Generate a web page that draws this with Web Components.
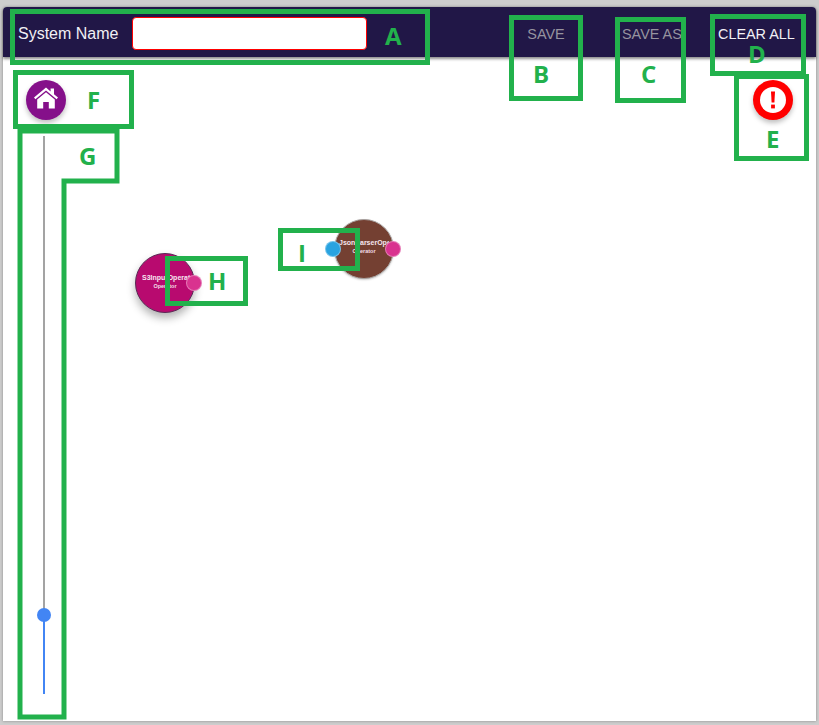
<!DOCTYPE html>
<html>
<head>
<meta charset="utf-8">
<title>System editor</title>
<style>
  html, body { margin: 0; height: 100%; }
  body {
    background: #cdcdcd;
    font-family: "Liberation Sans", Arial, sans-serif;
    overflow: hidden;
  }
</style>
</head>
<body>
<editor-window>
  <top-bar slot="bar">
    <system-name label="System Name"></system-name>
    <bar-button slot="actions" dim style="width:38px;margin-right:57px">SAVE</bar-button>
    <bar-button slot="actions" dim style="width:58px;margin-right:38px">SAVE AS</bar-button>
    <bar-button slot="actions" style="width:76px">CLEAR ALL</bar-button>
  </top-bar>
  <round-action style="left:26px;top:80px;background:#85108a" icon="home"></round-action>
  <round-action style="left:753px;top:80px;background:#ff0000" icon="alert"></round-action>
  <zoom-slider style="left:33px;top:129px"></zoom-slider>
  <flow-node style="left:135px;top:253px;background:#b80a6f;border-color:#5a2a55;--title-left:6px" title-text="S3InputOperator" shade></flow-node>
  <flow-node style="left:334px;top:219px;background:#744032;border-color:#a8a2a0;--title-left:4px;--title-top:-1px" title-text="JsonParserOperator" both></flow-node>

  <note-box style="left:10px;top:9px;width:410px;height:46px" label="A" lx="370" ly="8"></note-box>
  <note-box style="left:509px;top:15px;width:64px;height:76px" label="B" lx="19" ly="40"></note-box>
  <note-box style="left:615px;top:17px;width:61px;height:76px" label="C" lx="21" ly="38"></note-box>
  <note-box style="left:710px;top:14px;width:86px;height:52px" label="D" lx="33" ly="21"></note-box>
  <note-box style="left:734px;top:74px;width:65px;height:77px" label="E" lx="27" ly="46"></note-box>
  <note-box style="left:13px;top:70px;width:111px;height:49px" label="F" lx="69" ly="11"></note-box>
  <note-box style="left:165px;top:256px;width:73px;height:40px" label="H" lx="38" ly="6"></note-box>
  <note-box style="left:278px;top:228px;width:72px;height:33px" label="I" lx="15" ly="6"></note-box>
  <note-shape></note-shape>
</editor-window>

<script>
class EditorWindow extends HTMLElement {
  constructor() {
    super();
    this.attachShadow({ mode: 'open' });
    this.shadowRoot.innerHTML = `
      <style>
        :host { display: block; position: absolute; inset: 0; }
        #paper {
          margin: 7px 3px 0 3px;
          height: 714px;
          background: #fff;
          border-radius: 4px 4px 0 0;
          box-shadow: 0 0 3px rgba(0,0,0,.35);
        }
      </style>
      <div id="paper"><slot name="bar"></slot></div>
      <slot></slot>
    `;
  }
}
customElements.define('editor-window', EditorWindow);

class TopBar extends HTMLElement {
  constructor() {
    super();
    this.attachShadow({ mode: 'open' });
    this.shadowRoot.innerHTML = `
      <style>
        :host {
          display: flex;
          align-items: center;
          justify-content: space-between;
          height: 50px;
          box-sizing: border-box;
          padding: 0 22px 0 15px;
          background: #211747;
          border-radius: 4px 4px 0 0;
          box-shadow: 0 2px 3px rgba(0,0,0,.45);
        }
        #actions { display: flex; align-items: center; margin-top: 4px; }
      </style>
      <slot></slot>
      <div id="actions"><slot name="actions"></slot></div>
    `;
  }
}
customElements.define('top-bar', TopBar);

class SystemName extends HTMLElement {
  constructor() {
    super();
    this.attachShadow({ mode: 'open' });
    this.shadowRoot.innerHTML = `
      <style>
        :host { display: flex; align-items: center; gap: 14px; margin-top: 2px; }
        label { color: #f1f0f5; font-size: 16px; margin-top: 2px; }
        input {
          width: 235px;
          height: 33px;
          box-sizing: border-box;
          border: 1px solid #f00;
          border-radius: 4px;
          background: #fff;
          outline: none;
          padding: 0 8px;
        }
      </style>
      <label></label><input type="text">
    `;
    this.shadowRoot.querySelector('label').textContent = this.getAttribute('label');
  }
}
customElements.define('system-name', SystemName);

class BarButton extends HTMLElement {
  constructor() {
    super();
    this.attachShadow({ mode: 'open' });
    this.shadowRoot.innerHTML = `
      <style>
        :host {
          display: block;
          font-size: 14.4px;
          white-space: nowrap;
          text-align: center;
          color: #f1f0f5;
        }
        :host([dim]) { color: #96939f; }
      </style>
      <slot></slot>
    `;
  }
}
customElements.define('bar-button', BarButton);

const ICONS = {
  home: `<svg width="26" height="22" viewBox="0 0 26 22">
    <path fill="#fff" d="M13 0.5 L1 10.6 L2.4 12.3 L13 3.6 L23.6 12.3 L25 10.6 L21 7.2 V1.5 H17.6 V4.4 Z"/>
    <path fill="#fff" d="M13 5.2 L4.2 12.5 V21.5 H10.2 V15 H15.8 V21.5 H21.8 V12.5 Z"/>
  </svg>`,
  alert: `<svg width="40" height="40" viewBox="0 0 40 40">
    <circle cx="20" cy="20" r="13" fill="#fff"/>
    <path fill="#f00" d="M18 11.5 H22 L21.4 22.5 H18.6 Z"/>
    <rect x="18.1" y="24.6" width="3.8" height="3.8" fill="#f00"/>
  </svg>`
};

class RoundAction extends HTMLElement {
  constructor() {
    super();
    this.attachShadow({ mode: 'open' });
    this.shadowRoot.innerHTML = `
      <style>
        :host {
          position: absolute;
          width: 40px;
          height: 40px;
          border-radius: 50%;
          display: flex;
          align-items: center;
          justify-content: center;
          box-shadow: 0 3px 5px rgba(0,0,0,.25);
        }
        svg { display: block; }
        :host([icon="home"]) svg { margin-top: -4px; }
      </style>
      ${ICONS[this.getAttribute('icon')]}
    `;
  }
}
customElements.define('round-action', RoundAction);

class ZoomSlider extends HTMLElement {
  constructor() {
    super();
    this.attachShadow({ mode: 'open' });
    this.shadowRoot.innerHTML = `
      <style>
        :host { position: absolute; width: 22px; height: 565px; }
        #rail {
          position: absolute; left: 10px; top: 7px; bottom: 0; width: 2px;
          background: linear-gradient(#a3a3a3 0 479px, #4285f4 479px);
        }
        #knob {
          position: absolute; left: 4px; top: 479px; width: 14px; height: 14px;
          border-radius: 50%; background: #4285f4;
        }
      </style>
      <div id="rail"></div><div id="knob"></div>
    `;
  }
}
customElements.define('zoom-slider', ZoomSlider);

class FlowNode extends HTMLElement {
  constructor() {
    super();
    this.attachShadow({ mode: 'open' });
    this.shadowRoot.innerHTML = `
      <style>
        :host {
          position: absolute;
          width: 60px;
          height: 60px;
          box-sizing: border-box;
          border-radius: 50%;
          border: 1px solid;
          color: #fff;
          box-shadow: 0 1px 2px rgba(0,0,0,.2);
        }
        :host([shade]) { box-shadow: 0 5px 8px rgba(0,0,0,.3); }
        #title {
          position: absolute; left: var(--title-left, 6px); top: calc(18px + var(--title-top, 0px));
          width: 50px; overflow: hidden; white-space: nowrap;
          font-size: 7px; line-height: 11px; font-weight: bold; color: #f6e6ef;
        }
        #kind {
          position: absolute; left: 0; right: 0; top: calc(28px + var(--title-top, 0px));
          text-align: center; font-size: 5.5px; line-height: 8px; font-weight: bold; color: #f3dfe8;
        }
        .port {
          position: absolute; width: 16px; height: 16px; box-sizing: border-box;
          border-radius: 50%; border: 1px solid rgba(255,255,255,.35); top: 21px;
        }
        #out { right: -8px; background: #d9338f; }
        #in { left: -10px; background: #29a3e0; }
      </style>
      <div id="title"></div><div id="kind">Operator</div>
      ${this.hasAttribute('both') ? '<div class="port" id="in"></div>' : ''}
      <div class="port" id="out"></div>
    `;
    this.shadowRoot.querySelector('#title').textContent = this.getAttribute('title-text');
  }
}
customElements.define('flow-node', FlowNode);

class NoteBox extends HTMLElement {
  constructor() {
    super();
    this.attachShadow({ mode: 'open' });
    this.shadowRoot.innerHTML = `
      <style>
        :host {
          position: absolute;
          box-sizing: content-box;
          border: 5px solid #22b14c;
        }
        span {
          position: absolute;
          color: #22b14c;
          font: bold 24px/28px "Open Sans", sans-serif;
        }
      </style>
      <span></span>
    `;
    const s = this.shadowRoot.querySelector('span');
    s.textContent = this.getAttribute('label');
    s.style.left = this.getAttribute('lx') + 'px';
    s.style.top = this.getAttribute('ly') + 'px';
  }
}
customElements.define('note-box', NoteBox);

// the G callout is an L shape, so it gets an svg rather than a box
class NoteShape extends HTMLElement {
  constructor() {
    super();
    this.attachShadow({ mode: 'open' });
    this.shadowRoot.innerHTML = `
      <style>
        :host { position: absolute; left: 0; top: 0; width: 819px; height: 725px; pointer-events: none; }
        svg { position: absolute; inset: 0; }
        span {
          position: absolute; left: 79px; top: 142px; color: #22b14c;
          font: bold 24px/28px "Open Sans", sans-serif;
        }
      </style>
      <svg width="819" height="725" fill="none" stroke="#22b14c" stroke-width="5">
        <path d="M20 131 H117 V181 H64 V717 H20 Z"/>
      </svg>
      <span>G</span>
    `;
  }
}
customElements.define('note-shape', NoteShape);
</script>
</body>
</html>
